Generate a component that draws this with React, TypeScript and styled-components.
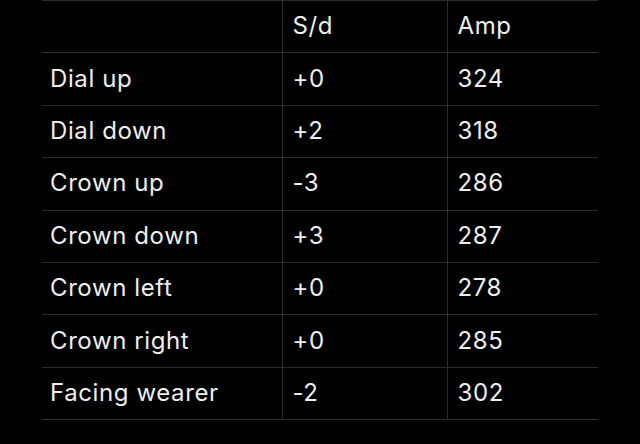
import React from 'react';
import styled, { createGlobalStyle } from 'styled-components';

const GlobalStyle = createGlobalStyle`
  html, body {
    margin: 0;
    padding: 0;
    background: #000;
  }
`

const Page = styled.div`
  width: 640px;
  height: 444px;
  background: #000;
  padding-left: 42px;
  box-sizing: border-box;
  overflow: hidden;
`

const Table = styled.table`
  width: 556px;
  border-collapse: collapse;
  font-family: 'Inter', 'Roboto', sans-serif;
  font-size: 24px;
  font-weight: 400;
  color: #eeeeee;
`

const Row = styled.tr`
  height: 52.4px;
  border-top: 1px solid #2c2c2c;
  border-bottom: 1px solid #2c2c2c;
`

const Cell = styled.td<{ $w: number; $divider?: boolean }>`
  width: ${p => p.$w}px;
  padding: 0 0 2px ${p => (p.$divider ? 10 : 8)}px;
  border-left: ${p => (p.$divider ? '1px solid #2c2c2c' : 'none')};
  vertical-align: middle;
  box-sizing: border-box;
  letter-spacing: 0.6px;
`

const rows = [
  ['Dial up', '+0', '324'],
  ['Dial down', '+2', '318'],
  ['Crown up', '-3', '286'],
  ['Crown down', '+3', '287'],
  ['Crown left', '+0', '278'],
  ['Crown right', '+0', '285'],
  ['Facing wearer', '-2', '302'],
]

const App: React.FC = () => {
  return (
    <Page>
      <GlobalStyle />
      <Table>
        <tbody>
          <Row>
            <Cell $w={240}></Cell>
            <Cell $w={165} $divider>S/d</Cell>
            <Cell $w={151} $divider>Amp</Cell>
          </Row>
          {rows.map(r => (
            <Row key={r[0]}>
              <Cell $w={240}>{r[0]}</Cell>
              <Cell $w={165} $divider>{r[1]}</Cell>
              <Cell $w={151} $divider>{r[2]}</Cell>
            </Row>
          ))}
        </tbody>
      </Table>
    </Page>
  )
}

export default App;
